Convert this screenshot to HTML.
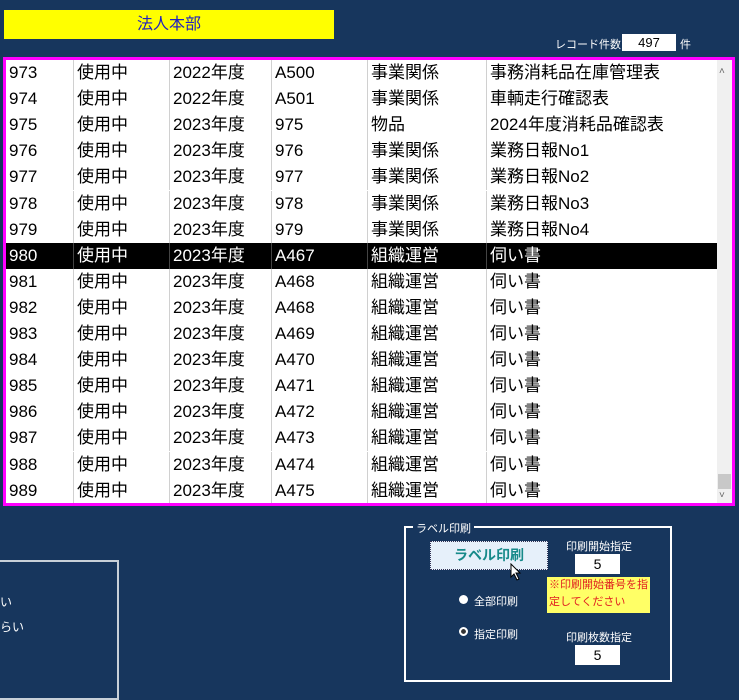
<!DOCTYPE html>
<html><head><meta charset="utf-8"><style>
body{margin:0;width:739px;height:688px;background:#17365d;position:relative;overflow:hidden;font-family:"Liberation Sans","Noto Sans CJK JP",sans-serif}
.a{position:absolute}
#list{left:3px;top:57px;width:726px;height:443px;border:3px solid #ff00ff;background:#fff;overflow:hidden}
.r{position:absolute;left:0;width:711px;height:26px;font-size:17px;line-height:26px;color:#000}
.r span{position:absolute;top:0;height:26px;border-right:1px solid #d0d0d0;padding-left:3px;box-sizing:border-box}
.r.sel{background:#000;color:#fff}
.r.sel span{border-right-color:#444}
.w{color:#fff;font-size:11px}
</style></head><body>
<div class="a" style="left:4px;top:10px;width:330px;height:29px;background:#ffff00;color:#2020c0;font-size:16px;text-align:center;line-height:29px">法人本部</div>
<div class="a w" style="left:555px;top:36px">レコード件数</div>
<div class="a" style="left:622px;top:34px;width:54px;height:17px;background:#fff;font-size:13px;text-align:center;line-height:18px">497</div>
<div class="a w" style="left:680px;top:36px">件</div>
<div id="list" class="a">
<div id="rows"></div>
<div class="a" style="left:711px;top:0;width:15px;height:443px;background:#f0f0f0"></div>
<div class="a" style="left:713px;top:6px;font-size:10px;color:#666">˄</div>
<div class="a" style="left:712px;top:414px;width:13px;height:15px;background:#c8c8c8"></div>
<div class="a" style="left:713px;top:430px;font-size:10px;color:#666">˅</div>
</div>
<script>
var d=[["973","2022年度","A500","事業関係","事務消耗品在庫管理表"],["974","2022年度","A501","事業関係","車輌走行確認表"],["975","2023年度","975","物品","2024年度消耗品確認表"],["976","2023年度","976","事業関係","業務日報No1"],["977","2023年度","977","事業関係","業務日報No2"],["978","2023年度","978","事業関係","業務日報No3"],["979","2023年度","979","事業関係","業務日報No4"]];
for(var i=0;i<10;i++){d.push([String(980+i),"2023年度","A"+[467,468,468,469,470,471,472,473,474,475][i],"組織運営","伺い書"]);}
var x=[0,68,164,266,362,481,711],h="";
d.forEach(function(r,i){var c=[r[0],"使用中",r[1],r[2],r[3],r[4]];h+='<div class="r'+(i==7?' sel':'')+'" style="top:'+(i*26.1)+'px">';for(var j=0;j<6;j++)h+='<span style="left:'+x[j]+'px;width:'+(x[j+1]-x[j])+'px'+(j==5?';border-right:none':'')+'">'+c[j]+'</span>';h+='</div>';});
document.getElementById('rows').innerHTML=h;
</script>
<div class="a" style="left:-5px;top:560px;width:124px;height:140px;border:2px solid #c8d0d8;border-left:none;box-sizing:border-box"></div>
<div class="a w" style="left:0;top:593px;font-size:12px">い</div>
<div class="a w" style="left:0;top:618px;font-size:12px">らい</div>
<div class="a" style="left:404px;top:526px;width:268px;height:156px;border:2px solid #fff;box-sizing:border-box"></div>
<div class="a w" style="left:413px;top:520px;background:#17365d;padding:0 3px">ラベル印刷</div>
<div class="a" style="left:430px;top:541px;width:118px;height:29px;background:#e6f0fa;border:1px dotted #335;box-sizing:border-box;color:#178a8a;font-weight:bold;font-size:14px;text-align:center;line-height:27px">ラベル印刷</div>
<svg class="a" style="left:510px;top:563px" width="12" height="18" viewBox="0 0 12 18"><path d="M1 1 L1 14 L4 11 L7 17 L9 16 L6 10 L10 10 Z" fill="#fff" stroke="#000"/></svg>
<div class="a w" style="left:566px;top:538px">印刷開始指定</div>
<div class="a" style="left:575px;top:554px;width:45px;height:20px;background:#fff;font-size:14px;text-align:center;line-height:20px">5</div>
<div class="a" style="left:547px;top:577px;width:103px;height:36px;background:#ffff66;color:#e02020;font-size:11px;line-height:17px;padding-left:2px;box-sizing:border-box">※印刷開始番号を指定してください</div>
<div class="a" style="left:459px;top:595px;width:9px;height:9px;border-radius:50%;background:#fff"></div>
<div class="a w" style="left:474px;top:593px">全部印刷</div>
<div class="a" style="left:459px;top:627px;width:9px;height:9px;border-radius:50%;background:#fff;box-sizing:border-box;border:2.5px solid #fff;box-shadow:inset 0 0 0 3px #333"></div>
<div class="a w" style="left:474px;top:626px">指定印刷</div>
<div class="a w" style="left:566px;top:629px">印刷枚数指定</div>
<div class="a" style="left:575px;top:645px;width:45px;height:20px;background:#fff;font-size:14px;text-align:center;line-height:20px">5</div>
</body></html>
